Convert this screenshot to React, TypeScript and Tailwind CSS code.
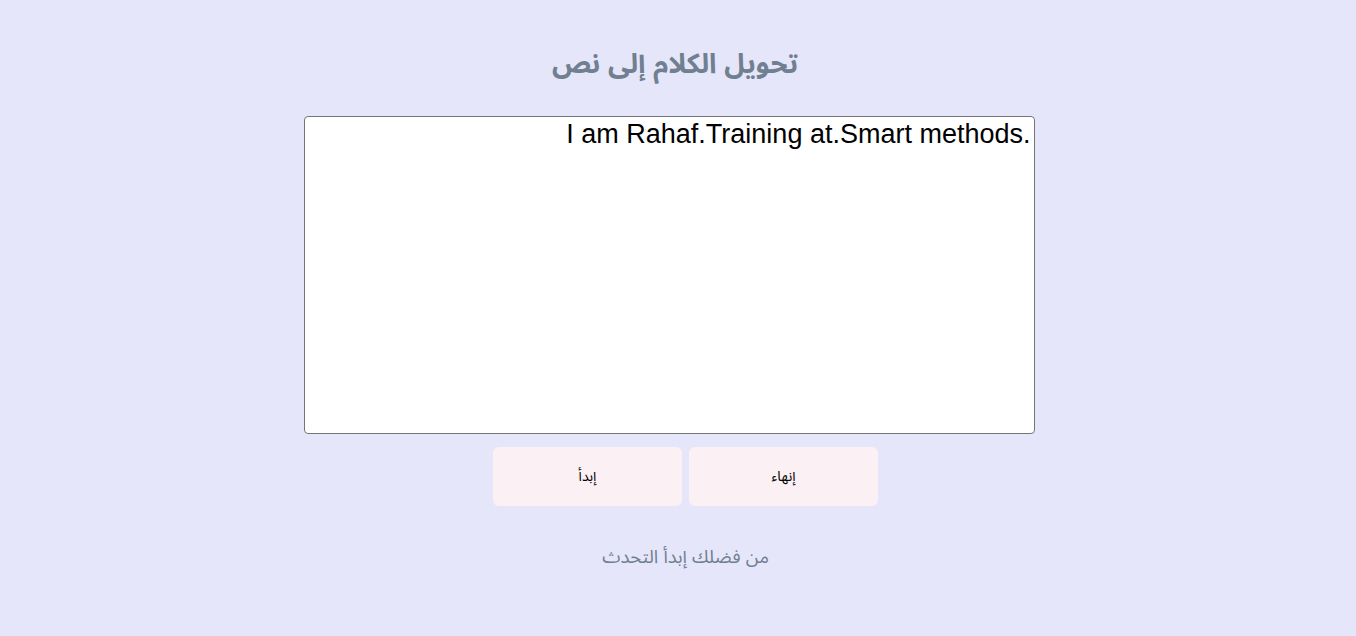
import React from "react";

export default function App() {
  return (
    <div
      dir="rtl"
      className="min-h-[636px] w-full bg-[#E6E6FA] flex flex-col items-center"
      style={{ fontFamily: '"Liberation Sans", Arial, "Noto Sans Arabic", "Noto Naskh Arabic", "DejaVu Sans", sans-serif' }}
    >
      <h1 className="mt-[40px] h-[48px] flex items-center text-[27.5px] font-bold text-[#708090] pr-[6px]">
        تحويل الكلام إلى نص
      </h1>
      <div className="mt-[28px] pr-[18px]">
        <textarea
          dir="ltr"
          readOnly
          value="I am Rahaf.Training at.Smart methods."
          className="block w-[731px] h-[318px] bg-white border border-[#767676] rounded-[4px] px-[3px] pt-[1px] pb-0 text-right text-[27px] leading-[32px] text-black resize-none outline-none"
          style={{ fontFamily: '"Liberation Sans", Arial, sans-serif' }}
        />
      </div>
      <div className="mt-[13px] flex gap-[7px] pl-[15px]">
        <button className="w-[189px] h-[59px] rounded-[6px] bg-[#FBF0F3] text-[14px] text-black">
          إنهاء
        </button>
        <button className="w-[189px] h-[59px] rounded-[6px] bg-[#FBF0F3] text-[14px] text-black">
          إبدأ
        </button>
      </div>
      <p className="mt-[37px] text-[18.5px] text-[#708090] pl-[15px]">من فضلك إبدأ التحدث</p>
    </div>
  );
}
